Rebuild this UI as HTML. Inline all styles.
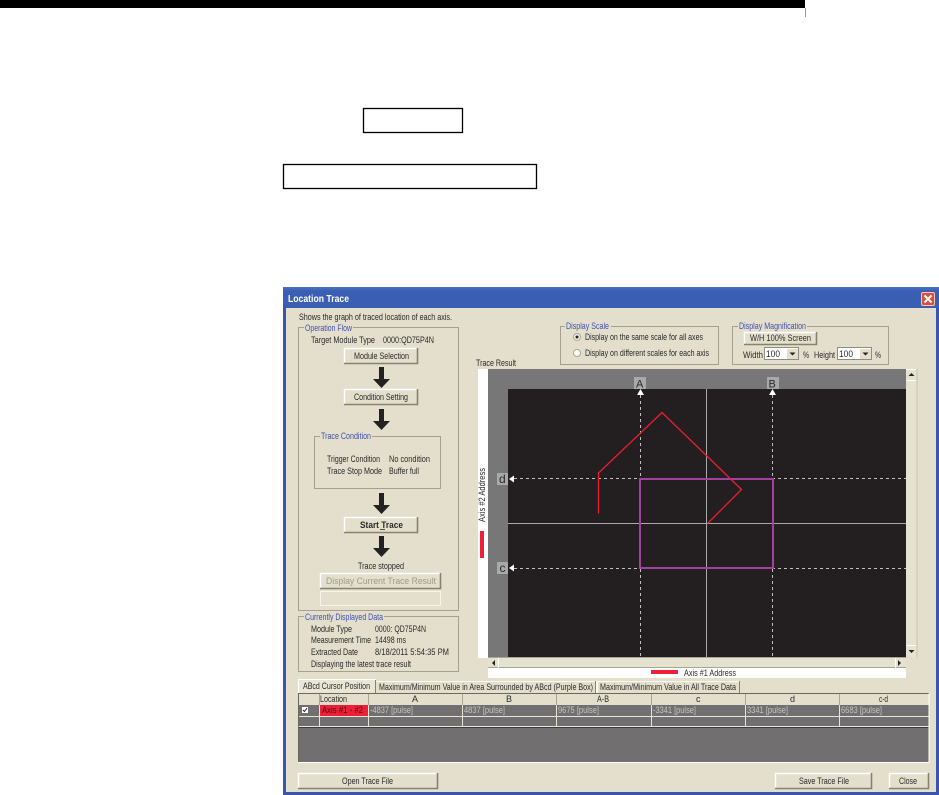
<!DOCTYPE html>
<html><head><meta charset="utf-8"><title>Location Trace</title>
<style>
html,body{margin:0;padding:0;background:#fff;width:939px;height:795px;overflow:hidden}
svg{display:block;position:absolute;left:0;top:0}
text{font-family:"Liberation Sans",sans-serif;font-size:9px;fill:#2a2a2a}
.b{fill:#3f51ad}
.hi{fill:none;stroke:#fff;stroke-width:1.4}
.lo{fill:none;stroke:#85836f;stroke-width:1.6}
.gr{fill:none;stroke:#a3a290;stroke-width:1}
.dash{stroke:#c0c0c0;stroke-width:1;stroke-dasharray:3 3;fill:none}
.lab{fill:#a9a9a9}
</style></head><body>
<svg width="939" height="795" viewBox="0 0 939 795" xmlns="http://www.w3.org/2000/svg">
<defs>
<linearGradient id="tb" x1="0" y1="0" x2="0" y2="1"><stop offset="0" stop-color="#4a6fc4"/><stop offset=".2" stop-color="#3a5eb4"/><stop offset="1" stop-color="#3b5fb0"/></linearGradient>
<filter id="s" x="-2%" y="-2%" width="104%" height="104%"><feGaussianBlur stdDeviation="0.32"/></filter>
</defs>
<!-- page -->
<rect x="0" y="0" width="805" height="8" fill="#000"/>
<rect x="805" y="8" width="1" height="9" fill="#999"/>
<rect x="363.500" y="108.500" width="99" height="24" fill="none" stroke="#000" stroke-width="1.300"/>
<rect x="283.500" y="164.500" width="253" height="24" fill="none" stroke="#000" stroke-width="1.300"/>

<!-- window -->
<rect x="283" y="287" width="656" height="508" fill="#3a55ac"/>
<rect x="283" y="287" width="656" height="21" fill="url(#tb)"/>
<rect x="286" y="308" width="650" height="484" fill="#e3dfcc"/>
<text x="288" y="302" textLength="61" lengthAdjust="spacingAndGlyphs" style="font-size:10px;font-weight:bold;fill:#fff">Location Trace</text>
<rect x="921.500" y="292.500" width="13" height="13" rx="1.500" fill="#d6503c" stroke="#f2c8b8"/>
<path d="M924.500 295.500L931.500 302.500M931.500 295.500L924.500 302.500" stroke="#fff" stroke-width="2"/>

<g filter="url(#s)">
<text x="299" y="320" textLength="153" lengthAdjust="spacingAndGlyphs">Shows the graph of traced location of each axis.</text>

<!-- Operation flow -->
<rect x="298.500" y="327.500" width="160" height="283" class="gr"/>
<rect x="304" y="323" width="49" height="9" fill="#e3dfcc"/>
<text x="305" y="331" textLength="47" lengthAdjust="spacingAndGlyphs" class="b">Operation Flow</text>
<text x="311" y="343" textLength="64" lengthAdjust="spacingAndGlyphs">Target Module Type</text>
<text x="383" y="343" textLength="51" lengthAdjust="spacingAndGlyphs">0000:QD75P4N</text>

<path d="M344.500 363V348.500H417" class="hi"/><path d="M417.500 348V363.500H344" class="lo"/>
<text x="354" y="359" textLength="55" lengthAdjust="spacingAndGlyphs">Module Selection</text>
<path d="M344.500 404V389.500H417" class="hi"/><path d="M417.500 389V404.500H344" class="lo"/>
<text x="354" y="400" textLength="54" lengthAdjust="spacingAndGlyphs">Condition Setting</text>

<path d="M379 367h5v12h6l-8.500 9l-8.500-9h6z" fill="#222"/>
<path d="M379 409h5v12h6l-8.500 9l-8.500-9h6z" fill="#222"/>

<rect x="314.500" y="436.500" width="126" height="52" class="gr"/>
<rect x="320" y="432" width="52" height="9" fill="#e3dfcc"/>
<text x="321" y="439" textLength="50" lengthAdjust="spacingAndGlyphs" class="b">Trace Condition</text>
<text x="327" y="462" textLength="53" lengthAdjust="spacingAndGlyphs">Trigger Condition</text>
<text x="389" y="462" textLength="41" lengthAdjust="spacingAndGlyphs">No condition</text>
<text x="327" y="474" textLength="55" lengthAdjust="spacingAndGlyphs">Trace Stop Mode</text>
<text x="389" y="474" textLength="30" lengthAdjust="spacingAndGlyphs">Buffer full</text>

<path d="M379 493h5v12h6l-8.500 9l-8.500-9h6z" fill="#222"/>
<path d="M344.500 532V517.500H417" class="hi"/><path d="M417.500 517V532.500H344" class="lo"/>
<text x="360" y="528" textLength="43" lengthAdjust="spacingAndGlyphs" style="font-weight:bold">Start Trace</text>
<rect x="380" y="529" width="5" height=".8" fill="#2a2a2a"/>
<path d="M379 536h5v12h6l-8.500 9l-8.500-9h6z" fill="#222"/>

<text x="358" y="569" textLength="46" lengthAdjust="spacingAndGlyphs">Trace stopped</text>
<path d="M320.500 588V573.500H440" class="hi"/><path d="M440.500 573V588.500H320" class="lo"/>
<text x="326" y="584" textLength="110" lengthAdjust="spacingAndGlyphs" style="fill:#9c9a8a">Display Current Trace Result</text>
<rect x="320.500" y="591.500" width="120" height="14" fill="#e3dfcc" stroke="#f7f5ea"/>

<!-- Currently displayed -->
<rect x="298.500" y="616.500" width="160" height="55" class="gr"/>
<rect x="304" y="612" width="80" height="9" fill="#e3dfcc"/>
<text x="305" y="620" textLength="78" lengthAdjust="spacingAndGlyphs" class="b">Currently Displayed Data</text>
<text x="311" y="632" textLength="41" lengthAdjust="spacingAndGlyphs">Module Type</text>
<text x="375" y="632" textLength="51" lengthAdjust="spacingAndGlyphs">0000: QD75P4N</text>
<text x="311" y="643" textLength="60" lengthAdjust="spacingAndGlyphs">Measurement Time</text>
<text x="375" y="643" textLength="31" lengthAdjust="spacingAndGlyphs">14498 ms</text>
<text x="311" y="655" textLength="47" lengthAdjust="spacingAndGlyphs">Extracted Date</text>
<text x="375" y="655" textLength="74" lengthAdjust="spacingAndGlyphs">8/18/2011 5:54:35 PM</text>
<text x="311" y="667" textLength="100" lengthAdjust="spacingAndGlyphs">Displaying the latest trace result</text>

<!-- Display scale -->
<rect x="560.500" y="326.500" width="158" height="38" class="gr"/>
<rect x="565" y="322" width="46" height="9" fill="#e3dfcc"/>
<text x="566" y="329" textLength="43" lengthAdjust="spacingAndGlyphs" class="b">Display Scale</text>
<circle cx="577" cy="337" r="3.500" fill="#f4f2e8" stroke="#a9a795"/><circle cx="577" cy="337" r="1.500" fill="#222"/>
<circle cx="577" cy="353" r="3.500" fill="#fbfaf4" stroke="#a9a795"/>
<text x="585" y="340" textLength="118" lengthAdjust="spacingAndGlyphs">Display on the same scale for all axes</text>
<text x="585" y="356" textLength="124" lengthAdjust="spacingAndGlyphs">Display on different scales for each axis</text>

<!-- Display magnification -->
<rect x="732.500" y="326.500" width="156" height="38" class="gr"/>
<rect x="738" y="322" width="69" height="9" fill="#e3dfcc"/>
<text x="739" y="329" textLength="67" lengthAdjust="spacingAndGlyphs" class="b">Display Magnification</text>
<path d="M744.500 345V332.500H816" class="hi"/><path d="M816.500 332V344.500H744" class="lo"/>
<text x="750" y="341" textLength="61" lengthAdjust="spacingAndGlyphs">W/H 100% Screen</text>
<text x="743" y="358" textLength="20" lengthAdjust="spacingAndGlyphs">Width</text>
<rect x="764.500" y="347.500" width="34" height="12" fill="#fff" stroke="#8f8d7c"/>
<rect x="787" y="349" width="11" height="10" fill="#e3dfcc"/><path d="M789.500 352.500h6l-3 3z" fill="#222"/>
<text x="766" y="357" textLength="14" lengthAdjust="spacingAndGlyphs">100</text>
<text x="803" y="358" textLength="6" lengthAdjust="spacingAndGlyphs">%</text>
<text x="814" y="358" textLength="21" lengthAdjust="spacingAndGlyphs">Height</text>
<rect x="837.500" y="347.500" width="34" height="12" fill="#fff" stroke="#8f8d7c"/>
<rect x="860" y="349" width="11" height="10" fill="#e3dfcc"/><path d="M862.500 352.500h6l-3 3z" fill="#222"/>
<text x="839" y="357" textLength="14" lengthAdjust="spacingAndGlyphs">100</text>
<text x="875" y="358" textLength="6" lengthAdjust="spacingAndGlyphs">%</text>

<text x="476" y="366" textLength="40" lengthAdjust="spacingAndGlyphs">Trace Result</text>
</g>

<!-- Graph -->
<rect x="478" y="369" width="10" height="289" fill="#fff"/>
<rect x="488" y="369" width="418" height="289" fill="#787777"/>
<rect x="508" y="389" width="398" height="268" fill="#231f20"/>
<rect x="488" y="668" width="418" height="10" fill="#fff"/>
<path d="M508 523.500H906M706.500 389V657" stroke="#aaa" fill="none"/>
<path d="M640.500 395V657M772.500 395V657M514 478.500H906M514 568.500H906" class="dash"/>
<rect x="640" y="479" width="133" height="89" fill="none" stroke="#a441a0" stroke-width="2"/>
<path d="M598.500 513.500V473L662 412.500L741.500 489.500L707.500 523.500" fill="none" stroke="#ec1f30" stroke-width="1.300"/>
<rect x="634" y="377" width="12" height="12" class="lab"/>
<rect x="767" y="377" width="12" height="12" class="lab"/>
<rect x="497" y="473" width="11" height="12" class="lab"/>
<rect x="497" y="562" width="11" height="12" class="lab"/>
<path d="M637 395h7l-3.500-6zM769 395h7l-3.500-6zM509 479l5-3.500v7zM509 568l5-3.500v7z" fill="#fff"/>
<g filter="url(#s)">
<text x="636" y="387.500" style="font-size:11px">A</text>
<text x="768.500" y="387.500" style="font-size:11px">B</text>
<text x="499" y="483" style="font-size:12px">d</text>
<text x="499.500" y="572" style="font-size:12px">c</text>
<text transform="translate(485,522) rotate(-90)" textLength="54" lengthAdjust="spacingAndGlyphs">Axis #2 Address</text>
<text x="684" y="676" textLength="52" lengthAdjust="spacingAndGlyphs">Axis #1 Address</text>
</g>
<rect x="480" y="531" width="4" height="27" fill="#ed2037"/>
<rect x="651" y="670" width="27" height="4" fill="#ed2037"/>

<!-- Scrollbars -->
<rect x="906" y="369" width="11" height="288" fill="#e6e2d0"/>
<path d="M906.500 369.500h10M906.500 380.500h10M906.500 645.500h10" stroke="#fff"/>
<path d="M917 369V657" stroke="#c4c2b0" stroke-width="1"/>
<path d="M908.500 376h6l-3-3zM908.500 650h6l-3 3z" fill="#222"/>
<rect x="488" y="658" width="418" height="10" fill="#e6e2d0"/>
<path d="M488 667.500H906M488 657.500H906" stroke="#a8a694"/>
<path d="M498.500 658V668M895.500 658V668" stroke="#fff"/>
<path d="M495 660v6l-3-3zM898 660v6l3-3z" fill="#222"/>

<!-- Tabs -->
<rect x="298.500" y="679.500" width="77" height="14" fill="#e9e6d6" stroke="#fff"/>
<path d="M375.500 680V693" stroke="#85836f"/>
<path d="M376.500 681.500H596.500V693" fill="none" stroke="#faf9f2"/>
<path d="M595.500 681V693" stroke="#85836f"/>
<path d="M597.500 693V681.500H739" fill="none" stroke="#faf9f2"/>
<path d="M739.500 681V693" stroke="#85836f"/>

<!-- Table -->
<rect x="298" y="693" width="631" height="70" fill="#716f70"/>
<rect x="298" y="694" width="631" height="11" fill="#e3dfcc"/>
<rect x="320" y="705" width="48" height="11" fill="#ed2037"/>
<path d="M298 716.500H929M298 726.500H929" stroke="#e8e5d6"/>
<path d="M298 727.500H929" stroke="#3d3c38"/>
<path d="M319.500 694V727M368.500 694V727M462.500 694V727M556.500 694V727M651.500 694V727M745.500 694V727M839.500 694V727" stroke="#e8e5d6"/>
<path d="M319.500 694V705M368.500 694V705M462.500 694V705M556.500 694V705M651.500 694V705M745.500 694V705M839.500 694V705" stroke="#a8a694"/>
<path d="M298.500 763V693.500H929" fill="none" stroke="#6a6858"/>
<path d="M929 693.500V762.500H298" fill="none" stroke="#fff"/>
<rect x="302" y="707" width="6" height="6" fill="#fff"/>
<path d="M303 710l1.500 1.500L307 708" fill="none" stroke="#222" stroke-width="1"/>

<g filter="url(#s)">
<text x="303" y="689" textLength="67" lengthAdjust="spacingAndGlyphs">ABcd Cursor Position</text>
<text x="379" y="690" textLength="214" lengthAdjust="spacingAndGlyphs">Maximum/Minimum Value in Area Surrounded by ABcd (Purple Box)</text>
<text x="600" y="690" textLength="136" lengthAdjust="spacingAndGlyphs">Maximum/Minimum Value in All Trace Data</text>
<text x="320" y="702" textLength="27" lengthAdjust="spacingAndGlyphs">Location</text>
<text x="412" y="702">A</text><text x="506" y="702">B</text>
<text x="597" y="702" textLength="12" lengthAdjust="spacingAndGlyphs">A-B</text>
<text x="696" y="702">c</text><text x="790" y="702">d</text>
<text x="879" y="702" textLength="9" lengthAdjust="spacingAndGlyphs">c-d</text>
<text x="322" y="713" textLength="41" lengthAdjust="spacingAndGlyphs" style="fill:#4a1015">Axis #1 - #2</text>
<text x="370" y="713" textLength="43" lengthAdjust="spacingAndGlyphs" style="fill:#c4c4bf">-4837 [pulse]</text>
<text x="464" y="713" textLength="41" lengthAdjust="spacingAndGlyphs" style="fill:#c4c4bf">4837 [pulse]</text>
<text x="558" y="713" textLength="41" lengthAdjust="spacingAndGlyphs" style="fill:#c4c4bf">9675 [pulse]</text>
<text x="653" y="713" textLength="43" lengthAdjust="spacingAndGlyphs" style="fill:#c4c4bf">-3341 [pulse]</text>
<text x="747" y="713" textLength="41" lengthAdjust="spacingAndGlyphs" style="fill:#c4c4bf">3341 [pulse]</text>
<text x="841" y="713" textLength="41" lengthAdjust="spacingAndGlyphs" style="fill:#c4c4bf">6683 [pulse]</text>
<!-- Bottom buttons -->
<path d="M298.500 788V773.500H437" class="hi"/><path d="M437.500 773V788.500H298" class="lo"/>
<text x="342" y="784" textLength="51" lengthAdjust="spacingAndGlyphs">Open Trace File</text>
<path d="M775.500 788V773.500H871" class="hi"/><path d="M871.500 773V788.500H775" class="lo"/>
<text x="799" y="784" textLength="50" lengthAdjust="spacingAndGlyphs">Save Trace File</text>
<path d="M889.500 788V773.500H928" class="hi"/><path d="M928.500 773V788.500H889" class="lo"/>
<text x="899" y="784" textLength="18" lengthAdjust="spacingAndGlyphs">Close</text>
</g>
</svg>
</body></html>
